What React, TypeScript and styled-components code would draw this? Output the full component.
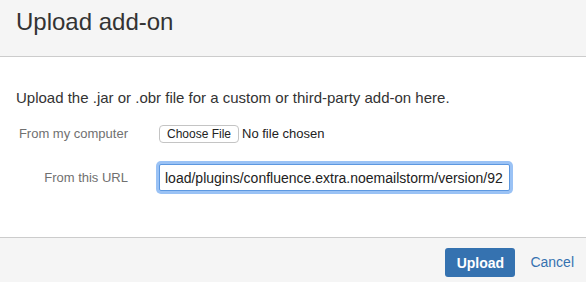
import React, { useState } from 'react';
import { styled, createGlobalStyle } from 'styled-components';

const GlobalStyle = createGlobalStyle`
	html, body {
		margin: 0;
		padding: 0;
		background: #ffffff;
	}
	body {
		font-family: 'Liberation Sans', Arial, sans-serif;
		color: #333333;
	}
`;

function App() {
	const [url, setUrl] = useState<string>('load/plugins/confluence.extra.noemailstorm/version/92');

	return (
		<>
			<GlobalStyle />
			<Dialog>
				<Header>
					<Title>Upload add-on</Title>
				</Header>
				<Content>
					<Description>Upload the .jar or .obr file for a custom or third-party add-on here.</Description>
					<Form>
						<FieldRow height={20}>
							<Label>From my computer</Label>
							<FileInput type='file' />
						</FieldRow>
						<FieldRow height={27}>
							<Label>From this URL</Label>
							<UrlInput type='text' value={url} onChange={(e) => setUrl(e.target.value)} autoFocus />
						</FieldRow>
					</Form>
				</Content>
				<Footer>
					<PrimaryButton>Upload</PrimaryButton>
					<CancelLink href='#'>Cancel</CancelLink>
				</Footer>
			</Dialog>
		</>
	);
}

export default App;

interface RowProps {
	height: number;
}

const Dialog = styled.div`
	width: 586px;
	height: 282px;
	display: flex;
	flex-direction: column;
	overflow: hidden;
`;

const Header = styled.div`
	height: 57px;
	box-sizing: border-box;
	padding: 7px 16px 0;
	background: #f5f5f5;
	border-bottom: 1px solid #cccccc;
	flex-shrink: 0;
`;

const Title = styled.h2`
	margin: 0;
	font-size: 24px;
	line-height: 30px;
	font-weight: normal;
	color: #333333;
`;

const Content = styled.div`
	height: 180px;
	box-sizing: border-box;
	padding: 31px 16px 0;
	flex-shrink: 0;
`;

const Description = styled.p`
	margin: 0 0 16px;
	font-size: 15px;
	line-height: 20px;
	color: #333333;
`;

const Form = styled.div`
	display: flex;
	flex-direction: column;
	gap: 20px;
`;

const FieldRow = styled.div<RowProps>`
	display: grid;
	grid-template-columns: 112px 1fr;
	column-gap: 31px;
	align-items: center;
	height: ${(props) => props.height}px;
`;

const Label = styled.label`
	text-align: right;
	white-space: nowrap;
	font-size: 13px;
	line-height: 20px;
	color: #707070;
`;

const FileInput = styled.input`
	font-family: 'Liberation Sans', Arial, sans-serif;
	font-size: 13px;
	color: #222222;

	&::file-selector-button {
		font-family: 'Liberation Sans', Arial, sans-serif;
		font-size: 12px;
		line-height: 14px;
		padding: 1px 7px;
		margin-right: 3px;
		border: 1px solid #c4c4c4;
		border-radius: 4px;
		background: #ffffff;
		color: #222222;
	}
`;

const UrlInput = styled.input`
	width: 351px;
	height: 27px;
	box-sizing: border-box;
	padding: 0 5px;
	border: 1px solid #5d98e0;
	border-radius: 2px;
	box-shadow: 0 0 0 3px #9ac2f5;
	outline: none;
	font-family: 'Liberation Sans', Arial, sans-serif;
	font-size: 14px;
	color: #222222;
	background: #ffffff;
`;

const Footer = styled.div`
	flex: 1;
	display: flex;
	justify-content: flex-end;
	align-items: flex-start;
	padding: 10px 12px 0 0;
	background: #f5f5f5;
	border-top: 1px solid #cccccc;
`;

const PrimaryButton = styled.button`
	width: 70px;
	height: 29px;
	border: none;
	border-radius: 3px;
	background: #3572b0;
	color: #ffffff;
	font-family: 'Liberation Sans', Arial, sans-serif;
	font-size: 14px;
	font-weight: bold;
	cursor: pointer;
`;

const CancelLink = styled.a`
	margin-left: 15px;
	line-height: 29px;
	font-size: 14px;
	color: #3572b0;
	text-decoration: none;
`;
